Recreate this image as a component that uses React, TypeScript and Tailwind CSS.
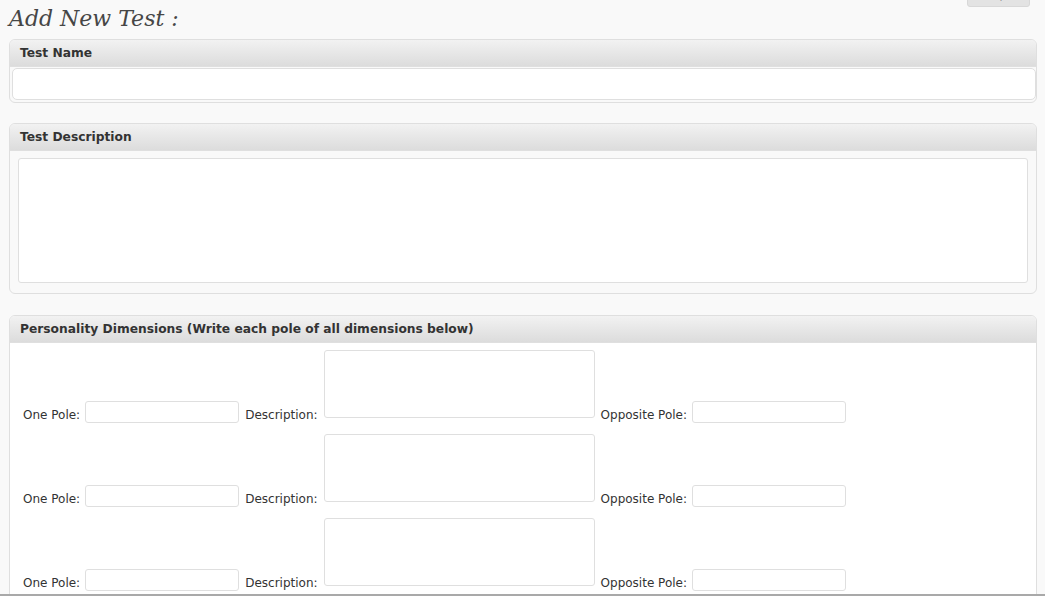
const dimensions = [1, 2, 3];

function PanelHeader({ title }: { title: string }) {
  return (
    <div className="h-[27px] flex items-center px-[10px] pt-[1px] rounded-t-[5px] bg-gradient-to-b from-[#f2f2f2] to-[#dcdcdc] border-b border-[#dfdfdf] text-[12.25px] font-bold text-[#333]">
      {title}
    </div>
  );
}

function DimensionRow() {
  return (
    <div className="flex items-end pl-[13px] text-[12px] leading-[14px] text-[#333]">
      <span className="mb-[1px]">One Pole:</span>
      <input className="ml-[5px] w-[154px] h-[22px] bg-white border border-[#dfdfdf] rounded-[3px]" />
      <span className="ml-[6px] mb-[1px]">Description:</span>
      <textarea className="ml-[6px] mb-[5px] w-[271px] h-[68px] bg-white border border-[#dfdfdf] rounded-[3px] resize-none" />
      <span className="ml-[6px] mb-[1px]">Opposite Pole:</span>
      <input className="ml-[5px] w-[154px] h-[22px] bg-white border border-[#dfdfdf] rounded-[3px]" />
    </div>
  );
}

export default function App() {
  return (
    <div className="relative h-[596px] overflow-hidden bg-[#f9f9f9] border-b-2 border-[#a9a9a9] font-['DejaVu_Sans',Verdana,sans-serif]">
      <div className="absolute right-[15px] top-[-14px] h-[21px] w-[63px] bg-[#e3e3e3] border border-[#d8d8d8] rounded-[3px] text-[11px] text-[#999] flex items-center justify-center">
        Help ▾
      </div>

      <div className="pl-[9px] pr-[8px]">
        <h1 className="pt-[5px] h-[39px] font-['DejaVu_Serif',Georgia,serif] italic text-[22px] leading-[28px] text-[#464646]">
          Add New Test :
        </h1>

        <div className="rounded-[6px] border border-[#dfdfdf] bg-[#f9f9f9]">
          <PanelHeader title="Test Name" />
          <div className="pl-[2px] pt-[1px] pb-[2px]">
            <input className="block w-full h-[32px] bg-white border border-[#dfdfdf] rounded-[5px]" />
          </div>
        </div>

        <div className="mt-[20px] rounded-[6px] border border-[#dfdfdf] bg-[#f9f9f9]">
          <PanelHeader title="Test Description" />
          <div className="px-[8px] pt-[7px] pb-[10px]">
            <textarea className="block w-full h-[125px] bg-white border border-[#dfdfdf] rounded-[3px] resize-none" />
          </div>
        </div>

        <div className="mt-[21px] rounded-[6px] border border-[#dfdfdf] bg-white">
          <PanelHeader title="Personality Dimensions (Write each pole of all dimensions below)" />
          <div className="pt-[7px] pb-[30px] flex flex-col gap-[11px]">
            {dimensions.map((d) => (
              <DimensionRow key={d} />
            ))}
          </div>
        </div>
      </div>
    </div>
  );
}
